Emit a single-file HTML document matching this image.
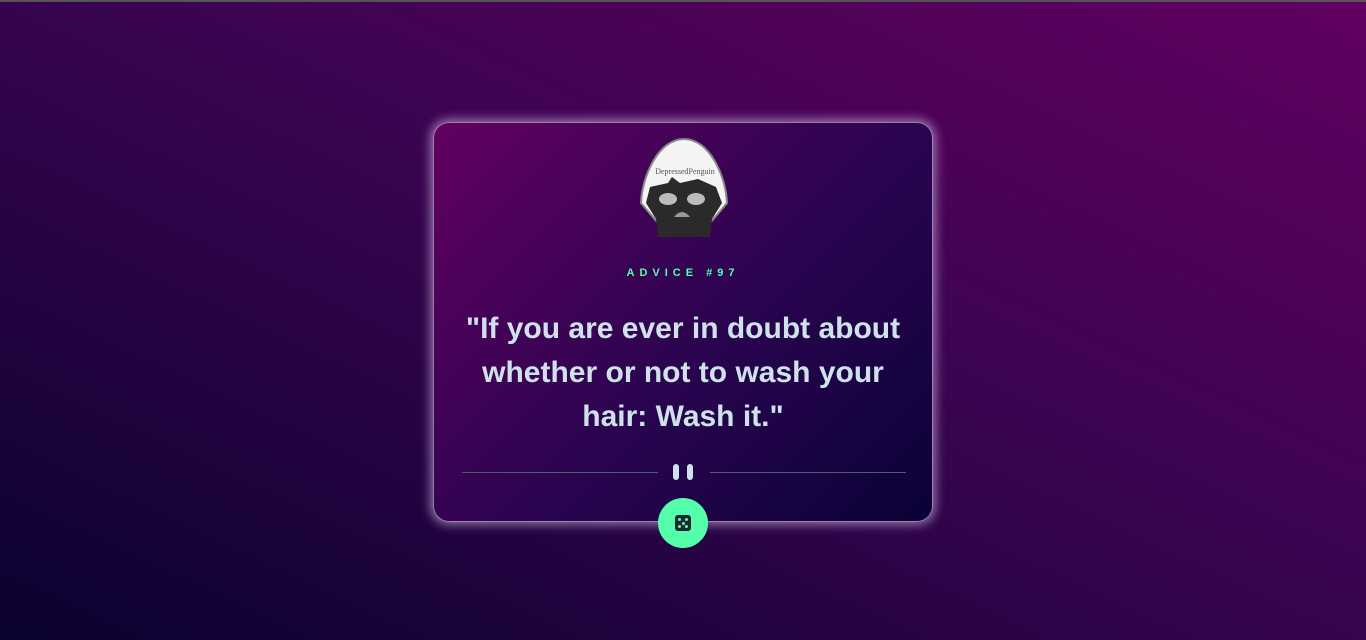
<!DOCTYPE html>
<html><head><meta charset="utf-8"><style>
html,body{margin:0;padding:0;width:1366px;height:640px;overflow:hidden}
body{background:linear-gradient(to top right,#0a0230 0%,#3b0450 55%,#620060 100%);position:relative;font-family:"Liberation Sans",sans-serif}
.top{position:absolute;left:0;top:0;width:100%;height:2px;background:#555}
.card{position:absolute;left:433px;top:122px;width:500px;height:400px;border-radius:16px;background:linear-gradient(135deg,#620060 0%,#2a0450 55%,#0a0236 100%);box-shadow:0 0 10px 3px rgba(220,200,240,.55);border:1px solid rgba(230,210,240,.6);box-sizing:border-box}
.label{position:absolute;top:144px;width:100%;text-align:center;color:#53ffaa;font-size:11px;font-weight:bold;letter-spacing:5px}
.q{position:absolute;top:184px;left:20px;right:20px;text-align:center;color:#cee3e9;font-size:30px;font-weight:bold;line-height:44px}
.line{position:absolute;top:349px;height:1px;background:#4e5d73}
.pause{position:absolute;top:341px;width:6px;height:16px;border-radius:3px;background:#cee3e9}
.btn{position:absolute;left:658px;top:498px;width:50px;height:50px;border-radius:50%;background:#53ffaa}
.die{position:absolute;left:17px;top:17px;width:16px;height:16px;border-radius:3px;background:#202733}
.d{position:absolute;width:3px;height:3px;border-radius:50%;background:#53ffaa}
</style></head><body>
<div class="top"></div>
<div class="card">
<svg style="position:absolute;left:204px;top:14px" width="92" height="102" viewBox="0 0 92 102">
<path d="M46 2 C20 2 4 40 3 66 L20 86 L72 86 L89 66 C88 40 72 2 46 2Z" fill="#f4f4f4" stroke="#888" stroke-width="2"/>
<path d="M12 50 L30 46 L34 40 L42 46 L60 42 L78 50 L84 66 L74 82 L72 100 L20 100 L18 82 L8 66Z" fill="#2a2a2a"/>
<ellipse cx="30" cy="62" rx="9" ry="6" fill="#bbb"/><ellipse cx="58" cy="62" rx="9" ry="6" fill="#bbb"/>
<path d="M36 80 Q44 70 52 80Z" fill="#999"/>
<text x="47" y="37" font-size="8" font-family="Liberation Serif" text-anchor="middle" fill="#555">DepressedPenguin</text>
</svg>
<div class="label">ADVICE #97</div>
<div class="q">"If you are ever in doubt about whether or not to wash your<br>hair: Wash it."</div>
<div class="line" style="left:28px;width:196px"></div>
<div class="line" style="left:276px;width:196px"></div>
<div class="pause" style="left:239px"></div><div class="pause" style="left:253px"></div>
</div>
<div class="btn"><div class="die">
<div class="d" style="left:3px;top:3px"></div><div class="d" style="left:10px;top:3px"></div>
<div class="d" style="left:6.5px;top:6.5px"></div>
<div class="d" style="left:3px;top:10px"></div><div class="d" style="left:10px;top:10px"></div>
</div></div>
</body></html>
